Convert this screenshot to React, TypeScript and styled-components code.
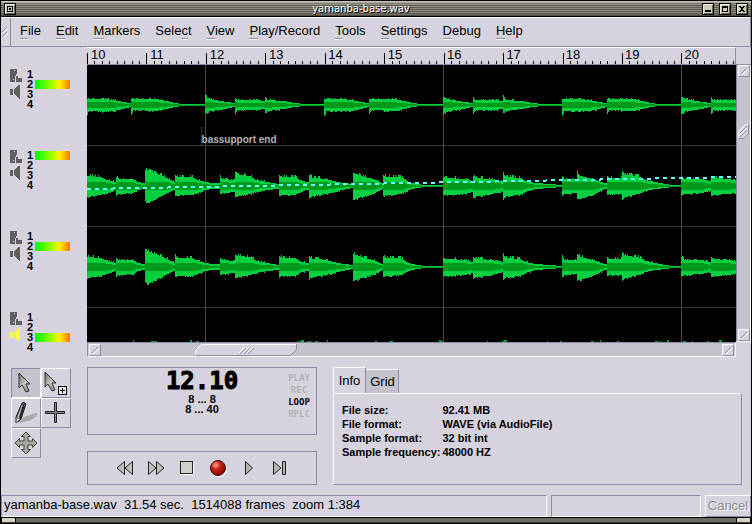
import React from 'react';
import styled, { createGlobalStyle, css } from 'styled-components';

const c = {
  face: '#d6d3de',
  trough: '#c5c1cd',
  dark: '#8c8ca8',
  light: '#ffffff',
  wave: '#00d040',
  core: '#00991c',
};

const sans = '"Liberation Sans", Arial, sans-serif';

const GlobalStyle = createGlobalStyle`
  * { box-sizing: border-box; }
  body { margin: 0; background: ${c.face}; color: #000; font: 13px/16px ${sans}; }
  button { font: inherit; color: inherit; margin: 0; padding: 0; border: 0; background: none; }
  svg { display: block; }
`;

const raised = css`
  border: 1px solid;
  border-color: ${c.light} ${c.dark} ${c.dark} ${c.light};
`;
const sunken = css`
  border: 1px solid;
  border-color: ${c.dark} ${c.light} ${c.light} ${c.dark};
`;

const Frame = styled.div`
  display: flex;
  flex-direction: column;
  min-height: 100vh;
  border: 1px solid #000;
  background: ${c.face};
`;

/* ---------- title bar ---------- */
const TitleBar = styled.header`
  display: flex;
  align-items: center;
  height: 16px;
  padding: 0 3px;
  border-top: 1px solid #c8c4b8;
  border-bottom: 1px solid #000;
  background:
    linear-gradient(to bottom, rgba(190, 186, 174, 0.7), rgba(120, 118, 106, 0) 3px 11px, rgba(60, 58, 52, 0.7) 14px),
    repeating-linear-gradient(to bottom, #8d897f 0 1px, #5f5c54 1px 2px);
`;
const Title = styled.h1`
  flex: 1;
  margin: 0;
  padding-left: 4px;
  color: #fff;
  font: 10px/14px "DejaVu Sans", sans-serif;
  text-align: center;
  text-shadow: 1px 1px 0 #000;
`;
const TitleButtons = styled.div`
  display: flex;
  gap: 5px;
`;
const TitleButton = styled.button`
  width: 12px;
  height: 12px;
  border: 1px solid #000;
`;

function WindowButton({ label, children }: { label: string; children: React.ReactNode }) {
  return (
    <TitleButton aria-label={label}>
      <svg width="10" height="10" viewBox="0 0 10 10" shapeRendering="crispEdges">
        <rect width="10" height="10" fill="#f0eedc" />
        <rect x="1" y="1" width="9" height="9" fill="#6d6a5c" />
        <rect x="1" y="1" width="8" height="8" fill="#cfccb6" />
        {children}
      </svg>
    </TitleButton>
  );
}

/* ---------- menu bar ---------- */
const MenuBar = styled.nav`
  display: flex;
  height: 30px;
  border: solid;
  border-width: 1px 1px 1px 0;
  border-color: ${c.light} ${c.dark} ${c.dark};
`;
const Grip = styled.div`
  display: flex;
  align-items: center;
  width: 10px;
  padding-left: 1px;
  border-right: 1px solid ${c.dark};
`;
const Menus = styled.div`
  display: flex;
  align-items: center;
  gap: 15px;
  padding: 0 0 2px 9px;
`;
const MenuButton = styled.button`
  white-space: nowrap;
`;
const Mnemonic = styled.span`
  border-bottom: 1px solid ${c.dark};
  box-shadow: 0 1px 0 ${c.light};
`;

const menus: [string, string, string][] = [
  ['', 'F', 'ile'],
  ['', 'E', 'dit'],
  ['', 'M', 'arkers'],
  ['Sele', 'c', 't'],
  ['', 'V', 'iew'],
  ['', 'P', 'lay/Record'],
  ['', 'T', 'ools'],
  ['', 'S', 'ettings'],
  ['', 'D', 'ebug'],
  ['', 'H', 'elp'],
];

/* ---------- editor area ---------- */
const Editor = styled.main`
  display: grid;
  grid-template-columns: 86px minmax(0, 1fr) 15px;
  grid-template-rows: 18px auto 15px;
`;
const Lanes = styled.div`
  grid-column: 1;
  grid-row: 2 / 4;
`;
const Lane = styled.section`
  display: flex;
  align-items: flex-start;
  height: 81px;
  padding: 4px 0 0 9px;
  &:last-child { height: 45px; }
`;
const LaneIcons = styled.div`
  display: flex;
  flex-direction: column;
  gap: 3px;
  width: 17px;
`;
const Outputs = styled.ol`
  margin: 0;
  padding: 0;
  list-style: none;
`;
const Output = styled.li`
  display: flex;
  align-items: center;
  gap: 2px;
  height: 10px;
  font: bold 11px/10px ${sans};
`;
const Meter = styled.div`
  width: 35px;
  height: 9px;
  background: linear-gradient(to right, #00ff08, #80ff00 40%, #fff000 70%, #ff7800);
`;

const Ruler = styled.div`
  display: grid;
  border-top: 1px solid ${c.light};
  border-right: 1px solid ${c.dark};
  border-bottom: 1px solid ${c.dark};
  > * { grid-area: 1 / 1; }
`;
const RulerTicks = styled.svg`
  width: 100%;
  height: 16px;
`;
const Beats = styled.div`
  display: grid;
  grid-template-columns: repeat(10, 1fr) 0.92fr;
`;
const Beat = styled.span`
  padding-left: 4px;
  font: 13px/14px ${sans};
`;
const RulerCorner = styled.div`
  border-bottom: 1px solid ${c.dark};
`;

const Canvas = styled.div`
  position: relative;
  background: #000;
`;
const Chart = styled.svg`
  width: 100%;
  height: 277px;
`;
const Marker = styled.span`
  position: absolute;
  left: 17.5%;
  top: 62px;
  height: 18px;
  padding-top: 7px;
  border-left: 1px dotted #c02020;
  color: #b4b4b4;
  font: bold 10px/11px ${sans};
  white-space: nowrap;
`;

const VScroll = styled.div`
  display: flex;
  flex-direction: column;
  padding: 0 1px;
  border-left: 1px solid ${c.dark};
  border-right: 1px solid ${c.light};
  border-bottom: 1px solid ${c.light};
  background: ${c.trough};
`;
const HScroll = styled.div`
  grid-column: 2;
  display: flex;
  padding: 1px;
  border-top: 1px solid ${c.dark};
  border-left: 1px solid ${c.dark};
  border-right: 1px solid ${c.light};
  border-bottom: 1px solid ${c.light};
  background: ${c.trough};
`;
const VTrack = styled.div`
  flex: 1;
  padding-top: 47px;
`;
const HTrack = styled.div`
  flex: 1;
  padding-left: 14.6%;
`;
const StepButton = styled.button`
  ${raised}
  width: 12px;
  height: 12px;
  background: ${c.face};
`;

function Step({ label }: { label: string }) {
  return (
    <StepButton aria-label={label}>
      <svg width="10" height="10" viewBox="0 0 10 10">
        <path d="M2 8L8 2" stroke={c.dark} />
        <path d="M3 9L9 3" stroke="#fff" />
      </svg>
    </StepButton>
  );
}

function Slashes({ x, y, n }: { x: number; y: number; n: number }) {
  return (
    <>
      {Array.from({ length: n }, (_, i) => (
        <g key={i} transform={`translate(${x + i * 4} ${y})`}>
          <path d="M0 7L6 1" stroke="#fff" />
          <path d="M1 8L7 2" stroke={c.dark} />
        </g>
      ))}
    </>
  );
}

/* ---------- waveform data ---------- */
type Point = [number, number, number];

const basePattern: Point[] = [
  [0, 5, 10], [2, 5, 5], [15, 5, 5], [16, 6, 6], [18, 5, 5], [27, 4, 5], [37, 2, 3], [44, 1, 1],
  [45, 5, 8], [47, 5, 4], [70, 5, 5], [80, 3, 3], [88, 1, 1], [96, 0, 0], [118, 0, 0],
  [119, 7, 8], [123, 5, 5], [134, 3, 4], [148, 1, 1],
  [149, 6, 8], [151, 4, 4], [170, 4, 4], [178, 3, 3],
  [179, 7, 7], [181, 4, 5], [198, 3, 3], [208, 1, 1], [218, 0, 0], [237, 0, 0],
];

const mainShape: Point[] = [
  [0, 9, 10], [13, 8, 8], [20, 5, 6], [28, 3, 3],
  [29, 8, 8], [31, 6, 7], [46, 6, 6], [50, 3, 3], [57, 2, 2],
  [58, 15, 14], [60, 15, 16], [64, 13, 14], [76, 9, 8], [87, 3, 3],
  [88, 10, 9], [90, 8, 8], [105, 8, 8], [110, 5, 6], [118, 3, 3], [125, 2, 2], [132, 2, 2],
  [133, 8, 7], [135, 6, 6], [147, 5, 5],
  [148, 11, 10], [151, 10, 9], [163, 9, 7], [168, 5, 5], [180, 3, 3], [191, 1, 2],
  [192, 10, 9], [195, 8, 8], [208, 8, 8], [214, 4, 4], [221, 3, 3],
  [222, 10, 11], [225, 7, 9], [239, 6, 7], [250, 3, 4], [265, 1, 1],
  [266, 12, 13], [269, 11, 12], [273, 9, 10], [286, 6, 7], [295, 2, 2],
  [296, 10, 9], [299, 8, 8], [313, 8, 7], [321, 3, 3], [330, 1, 1], [336, 0, 0], [355, 0, 0],
  [356, 8, 8], [359, 7, 8], [378, 6, 7], [385, 4, 5],
  [386, 9, 11], [389, 7, 9], [402, 6, 8], [415, 4, 4],
  [416, 11, 12], [419, 8, 9], [433, 7, 8], [438, 4, 5], [448, 2, 2], [463, 1, 1], [474, 0, 0],
  [475, 9, 8], [477, 6, 7], [489, 6, 6],
  [490, 12, 12], [493, 9, 12], [505, 6, 8], [517, 2, 2], [519, 2, 2],
  [520, 9, 8], [522, 7, 7], [534, 7, 7],
  [535, 14, 13], [538, 10, 10], [551, 9, 7], [558, 5, 4], [568, 3, 2], [578, 1, 1], [584, 0, 0], [593, 0, 0],
  [594, 9, 9], [597, 6, 7], [614, 6, 6], [623, 4, 4],
  [624, 9, 9], [627, 7, 8], [649, 5, 6],
];

const beatShape: Point[] = [0, 1, 2].flatMap((k) =>
  basePattern.map(([x, u, d]): Point => [x - 1 + k * 238, u, d]),
);

const WIDTH = 649;

function noise(x: number, seed: number) {
  const v = Math.sin(x * 12.9898 + seed * 78.233) * 43758.5453;
  return v - Math.floor(v);
}

function buildWave(shape: Point[], centre: number, seed: number, coreMax: number) {
  let outer = '';
  let core = '';
  let i = 0;
  for (let x = 0; x < WIDTH; x++) {
    while (i < shape.length - 2 && shape[i + 1][0] <= x) i++;
    const [x0, u0, d0] = shape[i];
    const [x1, u1, d1] = shape[i + 1];
    const t = Math.min(1, Math.max(0, (x - x0) / (x1 - x0)));
    let up = Math.round(u0 + (u1 - u0) * t);
    let down = Math.round(d0 + (d1 - d0) * t);
    const inner = Math.min(coreMax, Math.round(((up + down) / 2) * 0.6));
    if (up > 3 && noise(x, seed) > 0.72) up += up > 6 ? 2 : 1;
    if (down > 3 && noise(x, seed + 5) > 0.75) down += 1;
    outer += `M${x} ${centre - up - 1}h1v${up + down + 2}h-1z`;
    core += `M${x} ${centre - inner}h1v${Math.max(1, inner * 2)}h-1z`;
  }
  return { outer, core };
}

const waves = [
  buildWave(beatShape, 40, 1, 3),
  buildWave(mainShape, 121, 3, 4),
  buildWave(mainShape, 202, 4, 4),
];

const peaks = [46, 64, 66, 69, 103, 109, 211, 213, 214, 220, 222, 228, 240, 288, 302, 305, 352, 353, 400, 415, 417, 460, 473, 504, 513, 530, 568, 573, 580, 596, 605, 620, 632];

function Waveforms() {
  return (
    <Chart viewBox="0 0 649 277" preserveAspectRatio="none" shapeRendering="crispEdges" role="img" aria-label="Waveforms">
      {[80, 161, 242].map((y) => (
        <rect key={y} x="0" y={y} width="649" height="1" fill="#363636" />
      ))}
      {[118, 356, 594].map((x) => (
        <rect key={x} x={x} y="0" width="1" height="277" fill="#4a4a4a" />
      ))}
      {waves.map((w, i) => (
        <g key={i}>
          <path d={w.outer} fill={c.wave} />
          <path d={w.core} fill={c.core} />
        </g>
      ))}
      <path
        d={peaks.map((x, i) => `M${x} ${i % 4 ? 276 : 275}h${(i % 3) + 1}V277h-${(i % 3) + 1}z`).join('')}
        fill="#00a838"
      />
      <path d="M0 124L649 112" stroke="#66ffff" strokeWidth="2" strokeDasharray="4 4" fill="none" />
    </Chart>
  );
}

const beatNumbers = [10, 11, 12, 13, 14, 15, 16, 17, 18, 19, 20];

function Ticks() {
  let d = '';
  for (let i = 0; i < 88; i++) {
    const x = Math.round(i * 7.43);
    d += i % 8 === 0 ? `M${x} 5h1v11h-1z` : `M${x} 13h1v3h-1z`;
  }
  return (
    <RulerTicks viewBox="0 0 648 16" preserveAspectRatio="none" shapeRendering="crispEdges" aria-hidden="true">
      <path d={d} />
    </RulerTicks>
  );
}

function LaneStrip({ active, lit }: { active: number; lit?: boolean }) {
  return (
    <Lane>
      <LaneIcons>
        <svg width="12" height="13" viewBox="0 0 12 13" fill="#62605f" shapeRendering="crispEdges">
          <path fillRule="evenodd" d="M0 0H7V5H6V7H5V13H0ZM4 1V2H5V1ZM3 10V11H4V10Z" />
          <path d="M6 7H8V9H12V13H6Z" />
        </svg>
        <svg width="12" height="14" viewBox="0 0 12 14" fill={lit ? '#f8f84a' : '#62605f'} shapeRendering="crispEdges">
          <path d="M0 4H3V10H0ZM4 4L8 1V0H10V14H9L4 9Z" />
        </svg>
      </LaneIcons>
      <Outputs>
        {[1, 2, 3, 4].map((n) => (
          <Output key={n}>
            {n}
            {n === active && <Meter />}
          </Output>
        ))}
      </Outputs>
    </Lane>
  );
}

/* ---------- lower panel ---------- */
const Lower = styled.section`
  flex: 1;
  display: grid;
  grid-template-columns: 60px 230px minmax(0, 1fr);
  column-gap: 16px;
  align-items: start;
  padding: 10px 9px 10px 10px;
`;
const Tools = styled.div`
  display: grid;
  grid-template-columns: 30px 30px;
  grid-auto-rows: 30px;
  padding-top: 1px;
`;
const ToolButton = styled.button<{ $on?: boolean }>`
  ${(p) => (p.$on ? sunken : raised)}
  display: grid;
  place-items: center;
  background: ${(p) => (p.$on ? c.trough : c.face)};
`;
const Deck = styled.div`
  display: grid;
  row-gap: 16px;
`;
const Counter = styled.div`
  display: grid;
  grid-template-columns: 34px 1fr 34px;
  height: 68px;
  border: 1px solid ${c.dark};
`;
const Readout = styled.div`
  grid-column: 2;
  display: flex;
  flex-direction: column;
  align-items: center;
  padding-top: 4px;
  font: bold 11px/10px ${sans};
`;
const Position = styled.strong`
  margin-bottom: 3px;
  font: bold 24px/19px "DejaVu Sans Mono", monospace;
  -webkit-text-stroke: 1px #000;
`;
const Flags = styled.div`
  padding-top: 4px;
  text-align: center;
`;
const Flag = styled.div<{ $on?: boolean }>`
  color: ${(p) => (p.$on ? '#000' : '#b2b2b4')};
  font: bold 9px/12px "DejaVu Sans Mono", monospace;
`;
const Transport = styled.div`
  display: flex;
  align-items: center;
  justify-content: center;
  gap: 13px;
  height: 34px;
  border: 1px solid ${c.dark};
`;
const TransportButton = styled.button`
  display: grid;
  place-items: center;
  width: 18px;
  height: 18px;
`;
const Info = styled.div`
  display: flex;
  flex-direction: column;
`;
const TabRow = styled.div`
  display: flex;
  align-items: flex-end;
`;
const Tab = styled.button<{ $on?: boolean }>`
  height: ${(p) => (p.$on ? 27 : 24)}px;
  width: 33px;
  margin-bottom: ${(p) => (p.$on ? -1 : 0)}px;
  border: solid;
  border-width: 1px 1px 0 1px;
  border-color: ${c.light} ${c.dark} ${c.light} ${(p) => (p.$on ? c.light : c.trough)};
  background: ${(p) => (p.$on ? c.face : c.trough)};
`;
const TabPanel = styled.div`
  ${raised}
  min-height: 92px;
  padding: 9px 8px;
`;
const Facts = styled.dl`
  display: grid;
  grid-template-columns: max-content 1fr;
  column-gap: 2px;
  margin: 0;
  font: bold 11px/14px ${sans};
  dt, dd { margin: 0; white-space: nowrap; }
`;

const facts = [
  ['File size:', '92.41 MB'],
  ['File format:', 'WAVE (via AudioFile)'],
  ['Sample format:', '32 bit int'],
  ['Sample frequency:', '48000 HZ'],
];

/* ---------- status bar ---------- */
const Status = styled.footer`
  display: grid;
  grid-template-columns: minmax(0, 1fr) 150px 46px;
  column-gap: 4px;
  height: 22px;
`;
const StatusBox = styled.div`
  ${sunken}
  padding: 1px 2px;
  white-space: pre;
`;
const CancelButton = styled.button`
  ${raised}
  color: #8a8990;
  text-shadow: 1px 1px 0 #fff;
`;
const ResizeBar = styled.div`
  display: flex;
  justify-content: space-between;
  height: 6px;
  border-top: 1px solid #000;
  border-bottom: 1px solid #3c3a34;
  background: #6c6b62;
`;
const ResizeCorner = styled.div`
  width: 15px;
  border: solid #000;
  border-width: 0 1px;
  background: #d8d4c4;
`;

const Pointer = () => (
  <path d="M1 1V16L4 13L8 20L11 19L8 12H12Z" fill="url(#metal)" stroke="#333" strokeWidth="1" />
);

export default function App() {
  return (
    <Frame>
      <GlobalStyle />
      <TitleBar>
        <WindowButton label="Window menu">
          <path d="M2 2H8V8H2ZM3 3V7H7V3ZM4 4H6V6H4Z" fillRule="evenodd" />
        </WindowButton>
        <Title>yamanba-base.wav</Title>
        <TitleButtons>
          <WindowButton label="Minimize"><path d="M2 6H8V8H2Z" /></WindowButton>
          <WindowButton label="Maximize"><path d="M2 2H8V8H2ZM3 4V7H7V4Z" fillRule="evenodd" /></WindowButton>
          <WindowButton label="Close">
            <path d="M2 2H4V3H6V2H8V3H7V4H6V6H7V7H8V8H6V7H4V8H2V7H3V6H4V4H3V3H2Z" />
          </WindowButton>
        </TitleButtons>
      </TitleBar>

      <MenuBar aria-label="Main menu">
        <Grip>
          <svg width="7" height="12" viewBox="0 0 7 12">
            <path d="M0 6L5 1M0 11L5 6" stroke={c.dark} />
            <path d="M1 7L6 2M1 12L6 7" stroke="#fff" />
          </svg>
        </Grip>
        <Menus>
          {menus.map(([before, key, after]) => (
            <MenuButton key={before + key + after}>
              {before}<Mnemonic>{key}</Mnemonic>{after}
            </MenuButton>
          ))}
        </Menus>
      </MenuBar>

      <Editor>
        <div />
        <Ruler>
          <Ticks />
          <Beats>
            {beatNumbers.map((n) => <Beat key={n}>{n}</Beat>)}
          </Beats>
        </Ruler>
        <RulerCorner />
        <Lanes>
          <LaneStrip active={2} />
          <LaneStrip active={1} />
          <LaneStrip active={2} />
          <LaneStrip active={3} lit />
        </Lanes>
        <Canvas>
          <Waveforms />
          <Marker>bassupport end</Marker>
        </Canvas>
        <VScroll>
          <Step label="Scroll up" />
          <VTrack>
            <svg width="12" height="16" viewBox="0 0 12 16">
              <path d="M0.5 7.5L7.5 0.5H10.5V9.5L5.5 14.5H0.5Z" fill={c.face} stroke={c.dark} />
              <path d="M0.5 14V7.5L7.5 0.5H10" fill="none" stroke="#fff" />
              <path d="M2 9L9 2M2 13L9 6" stroke={c.dark} />
              <path d="M2 11L9 4" stroke="#fff" />
            </svg>
          </VTrack>
          <Step label="Scroll down" />
        </VScroll>
        <HScroll>
          <Step label="Scroll left" />
          <HTrack>
            <svg width="103" height="12" viewBox="0 0 103 12">
              <path d="M0.5 6.5L6.5 0.5H101.5V5.5L95.5 11.5H0.5Z" fill={c.face} stroke={c.dark} />
              <path d="M0.5 11V6.5L6.5 0.5H101" fill="none" stroke="#fff" />
              <Slashes x={44} y={2} n={3} />
            </svg>
          </HTrack>
          <Step label="Scroll right" />
        </HScroll>
      </Editor>

      <Lower>
        <Tools>
          <ToolButton $on aria-label="Select">
            <svg width="26" height="26" viewBox="0 0 26 26">
              <defs>
                <linearGradient id="metal" x1="0" y1="0" x2="1" y2="1">
                  <stop offset="0" stopColor="#6c6c68" />
                  <stop offset="0.5" stopColor="#c4c4be" />
                  <stop offset="1" stopColor="#7c7c76" />
                </linearGradient>
              </defs>
              <g transform="translate(5 2)"><Pointer /></g>
            </svg>
          </ToolButton>
          <ToolButton aria-label="Add to selection">
            <svg width="28" height="28" viewBox="0 0 28 28">
              <g transform="translate(2 2)"><Pointer /></g>
              <rect x="16.5" y="17.5" width="8" height="8" fill="#e8e8e0" stroke="#000" />
              <path d="M18 21.5H23M20.5 19V24" stroke="#000" />
            </svg>
          </ToolButton>
          <ToolButton aria-label="Draw">
            <svg width="28" height="28" viewBox="0 0 28 28">
              <path d="M5 24C8 19 16 16 25 14C26 18 18 23 5 24Z" fill="#aaa9ac" />
              <path d="M10 4Q12 2 14 5L9 20L4 24L4 18Z" fill="#555" stroke="#222" />
              <path d="M11 6L6 19" stroke="#bbb" strokeWidth="2" />
              <path d="M12 5L8 19" stroke="#222" strokeWidth="2" />
              <path d="M4.5 19L8 20L4 24Z" fill="#eee" stroke="#777" />
            </svg>
          </ToolButton>
          <ToolButton aria-label="Crosshair">
            <svg width="28" height="28" viewBox="0 0 28 28">
              <path d="M12.5 3.5H14.5V12.5H22.5V14.5H14.5V23.5H12.5V14.5H3.5V12.5H12.5Z" fill="#84847e" stroke="#222" />
            </svg>
          </ToolButton>
          <ToolButton aria-label="Move">
            <svg width="26" height="26" viewBox="0 0 26 26">
              <path d="M13 2L17.500 6.500H15V11H19.500V8.500L24 13L19.500 17.500V15H15V19.500H17.500L13 24L8.500 19.500H11V15H6.500V17.500L2 13L6.500 8.500V11H11V6.500H8.500Z" fill="#a8a8a2" stroke="#44443f" />
            </svg>
          </ToolButton>
        </Tools>

        <Deck>
          <Counter>
            <Readout>
              <Position>12.10</Position>
              <span>8 ... 8</span>
              <span>8 ... 40</span>
            </Readout>
            <Flags>
              <Flag>PLAY</Flag>
              <Flag>REC</Flag>
              <Flag $on>LOOP</Flag>
              <Flag>RPLC</Flag>
            </Flags>
          </Counter>
          <Transport>
            <TransportButton aria-label="Rewind">
              <svg width="18" height="16" viewBox="0 0 18 16" fill="#c0c0b8" stroke="#222">
                <path d="M8.5 1.500V14.500L1 8ZM16.500 1.500V14.500L9 8Z" />
              </svg>
            </TransportButton>
            <TransportButton aria-label="Fast forward">
              <svg width="18" height="16" viewBox="0 0 18 16" fill="#c0c0b8" stroke="#222">
                <path d="M1.500 1.500V14.500L9 8ZM9.500 1.500V14.500L17 8Z" />
              </svg>
            </TransportButton>
            <TransportButton aria-label="Stop">
              <svg width="14" height="14" viewBox="0 0 14 14">
                <path d="M1 13.5H13.5V1" fill="none" stroke="#fff" />
                <rect x="0.5" y="0.5" width="12" height="12" fill="#d0d0ca" stroke="#222" />
              </svg>
            </TransportButton>
            <TransportButton aria-label="Record">
              <svg width="18" height="18" viewBox="0 0 18 18">
                <defs>
                  <radialGradient id="rec" cx="0.35" cy="0.3" r="0.75">
                    <stop offset="0" stopColor="#ffa090" />
                    <stop offset="0.4" stopColor="#cc2214" />
                    <stop offset="1" stopColor="#7a0400" />
                  </radialGradient>
                </defs>
                <circle cx="10" cy="10" r="8" fill="#fff" />
                <circle cx="9" cy="9" r="7.5" fill="url(#rec)" stroke="#3a0a08" />
              </svg>
            </TransportButton>
            <TransportButton aria-label="Play">
              <svg width="10" height="16" viewBox="0 0 10 16" fill="#b4b4ae" stroke="#222">
                <path d="M1.5 1.5V14.5L8.5 8Z" />
              </svg>
            </TransportButton>
            <TransportButton aria-label="Play to end">
              <svg width="16" height="16" viewBox="0 0 16 16" fill="#b4b4ae" stroke="#222">
                <path d="M1.5 1.5V14.5L9 8ZM10.5 1.5H13.5V14.5H10.5Z" />
              </svg>
            </TransportButton>
          </Transport>
        </Deck>

        <Info>
          <TabRow role="tablist">
            <Tab $on role="tab" aria-selected="true">Info</Tab>
            <Tab role="tab" aria-selected="false">Grid</Tab>
          </TabRow>
          <TabPanel role="tabpanel">
            <Facts>
              {facts.map(([k, v]) => (
                <React.Fragment key={k}>
                  <dt>{k}</dt>
                  <dd>{v}</dd>
                </React.Fragment>
              ))}
            </Facts>
          </TabPanel>
        </Info>
      </Lower>

      <Status>
        <StatusBox>yamanba-base.wav  31.54 sec.  1514088 frames  zoom 1:384</StatusBox>
        <StatusBox />
        <CancelButton disabled>Cancel</CancelButton>
      </Status>
      <ResizeBar>
        <ResizeCorner />
        <ResizeCorner />
      </ResizeBar>
    </Frame>
  );
}
